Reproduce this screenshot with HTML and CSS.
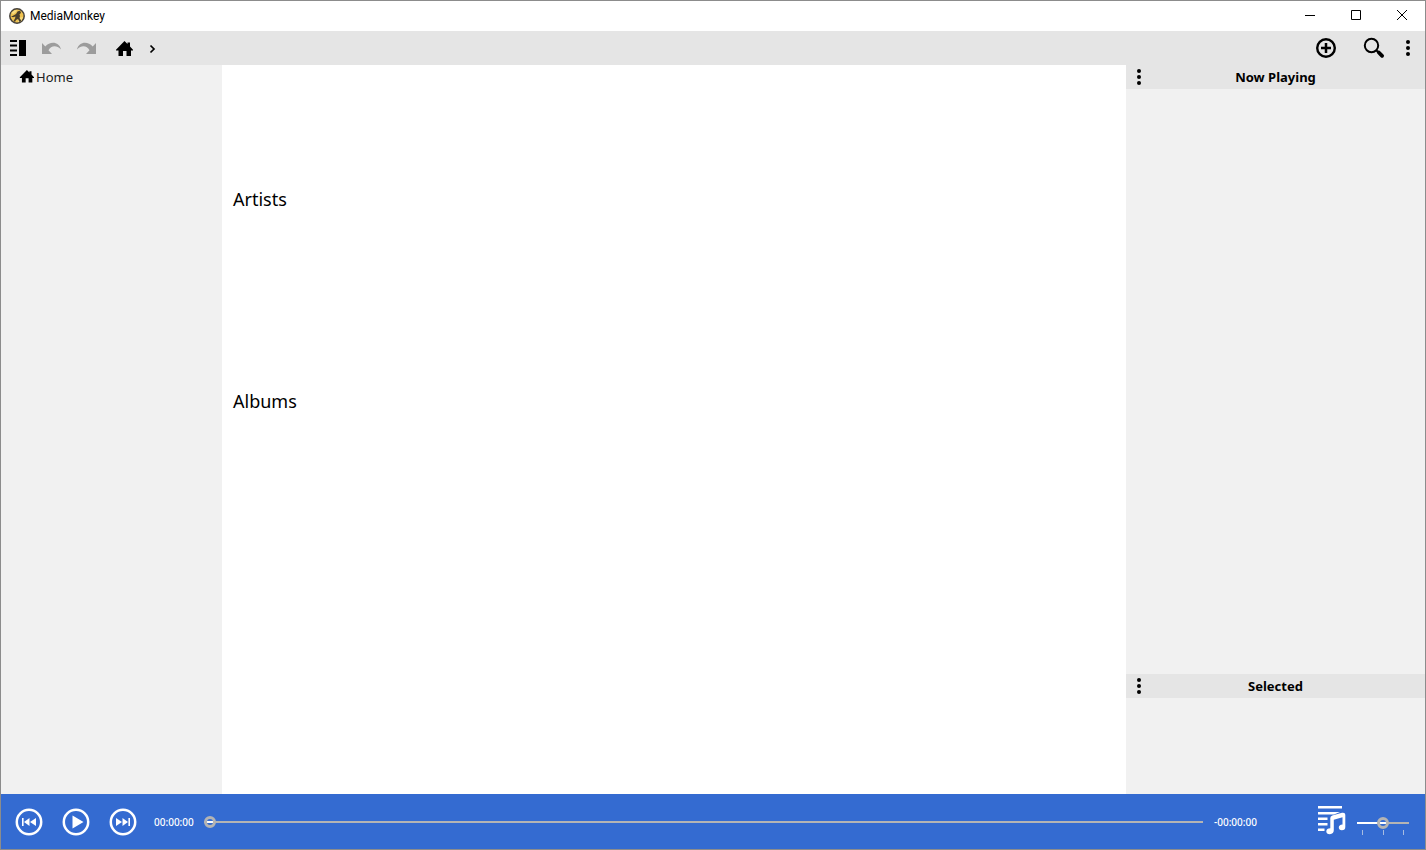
FILE: index.html
```html
<!DOCTYPE html>
<html lang="en">
<head>
<meta charset="utf-8">
<title>MediaMonkey</title>
<link rel="stylesheet" href="styles.css">
</head>
<body>
<div class="window">
  <header class="titlebar">
    <svg class="app-icon" width="16" height="16" viewBox="0 0 16 16" aria-hidden="true">
      <circle cx="8" cy="8" r="7.2" fill="#efc250" stroke="#45413c" stroke-width="1.5"/>
      <path d="M2 5 5 2.5 8 2 7 4 4.500 6zM9 10 14 9 12.500 13 9 14z" fill="#f8dc82"/>
      <path d="M8.500 3.500 10.500 2.800 12 4 11.500 5.500 10.500 6.200 11 8 10.500 10 12.500 13 10.500 14 9 11 7 12 6 14 4.500 13 6 10.500 6.500 8.500 4 9.200 2 8.500 4 7.800 7 6z" fill="#4a3f2c"/>
    </svg>
    <h1 class="app-name">MediaMonkey</h1>
    <div class="window-buttons">
      <button class="window-button" aria-label="Minimize"><svg width="12" height="12" viewBox="0 0 12 12"><path d="M1 6.500h10" stroke="#000"/></svg></button>
      <button class="window-button" aria-label="Maximize"><svg width="12" height="12" viewBox="0 0 12 12"><path d="M1.500 1.500h9v9h-9z" fill="none" stroke="#000"/></svg></button>
      <button class="window-button" aria-label="Close"><svg width="12" height="12" viewBox="0 0 12 12"><path d="m1 1 10 10M11 1 1 11" stroke="#000"/></svg></button>
    </div>
  </header>

  <div class="toolbar">
    <button class="tool" aria-label="Toggle panels"><svg width="20" height="20" viewBox="0 0 20 20"><path d="M11 2h7v16h-7zM2 2h7v2H2zM2 6.500h7v2H2zM2 11.500h7v2H2zM2 16h7v2H2z"/></svg></button>
    <button class="tool" aria-label="Back" disabled><svg width="20" height="20" viewBox="0 0 20 20"><path id="undo" d="M0 5v11h10L6.500 12.200C9 7.500 14.500 6.500 19 11.500 17.500 4 8.500 2.500 3.300 8.500z"/></svg></button>
    <button class="tool" aria-label="Forward" disabled><svg width="20" height="20" viewBox="0 0 20 20"><use href="#undo" transform="matrix(-1 0 0 1 20 0)"/></svg></button>
    <nav class="breadcrumb" aria-label="Location">
      <button class="tool" aria-label="Home"><svg width="20" height="20" viewBox="0 0 20 20"><path id="home" d="M10.500 3 13.500 6V4.500h2.500v4L19 11.800V12.500h-2v5.500h-4.500v-5H9v5H4.500v-5.500H2v-.700z"/></svg></button>
      <button class="tool" aria-label="Show children"><svg width="8" height="20" viewBox="0 0 8 20"><path d="m2.500 7.500 3.500 3.500-3.500 3.500" fill="none" stroke="#000" stroke-width="1.700"/></svg></button>
    </nav>
    <div class="toolbar-end">
      <button class="tool" aria-label="Add"><svg width="22" height="22" viewBox="0 0 22 22"><circle cx="11" cy="11" r="8.800" fill="none" stroke="#000" stroke-width="2.400"/><path d="M11 6v10M6 11h10" stroke="#000" stroke-width="2.500"/></svg></button>
      <button class="tool" aria-label="Search"><svg width="22" height="22" viewBox="0 0 22 22"><circle cx="8.500" cy="8.500" r="6.700" fill="none" stroke="#000" stroke-width="2"/><path d="m13.500 13.500 2 2" stroke="#000" stroke-width="2"/><path d="m15.800 15.500 3.300 3.300" stroke="#000" stroke-width="3.800" stroke-linecap="round"/></svg></button>
      <button class="tool" aria-label="Menu"><svg width="6" height="18" viewBox="0 0 6 18"><circle cx="3" cy="3" r="2"/><circle cx="3" cy="9" r="2"/><circle cx="3" cy="15" r="2"/></svg></button>
    </div>
  </div>

  <div class="workspace">
    <nav class="sidebar" aria-label="Library">
      <a class="tree-item" href="#home-view"><svg width="15" height="15" viewBox="1 3 18 18" aria-hidden="true"><use href="#home"/></svg>Home</a>
    </nav>
    <main class="content" id="home-view">
      <section class="shelf"><h2 class="shelf-title">Artists</h2></section>
      <section class="shelf"><h2 class="shelf-title">Albums</h2></section>
    </main>
    <aside class="panels">
      <section class="panel panel-grow">
        <header class="panel-header">
          <button class="tool" aria-label="Now Playing menu"><svg width="6" height="18" viewBox="0 0 6 18"><circle cx="3" cy="3" r="2"/><circle cx="3" cy="9" r="2"/><circle cx="3" cy="15" r="2"/></svg></button>
          <h2 class="panel-title">Now Playing</h2>
        </header>
      </section>
      <section class="panel">
        <header class="panel-header">
          <button class="tool" aria-label="Selected menu"><svg width="6" height="18" viewBox="0 0 6 18"><circle cx="3" cy="3" r="2"/><circle cx="3" cy="9" r="2"/><circle cx="3" cy="15" r="2"/></svg></button>
          <h2 class="panel-title">Selected</h2>
        </header>
      </section>
    </aside>
  </div>

  <footer class="player">
    <div class="transport">
      <button class="play-button" aria-label="Previous"><svg width="28" height="28" viewBox="0 0 28 28"><circle class="ring" cx="14" cy="14" r="12.200"/><path d="M7 10h1.600v8H7zM14.500 10v8L9 14zM21 10v8l-6-4z"/></svg></button>
      <button class="play-button" aria-label="Play"><svg width="28" height="28" viewBox="0 0 28 28"><circle class="ring" cx="14" cy="14" r="12.200"/><path d="M10.500 7.500v13l11-6.500z"/></svg></button>
      <button class="play-button" aria-label="Next"><svg width="28" height="28" viewBox="0 0 28 28"><circle class="ring" cx="14" cy="14" r="12.200"/><path d="M19.400 10H21v8h-1.600zM13.500 10v8l5.500-4zM7 10v8l6-4z"/></svg></button>
    </div>
    <span class="time">00:00:00</span>
    <input class="slider seek" type="range" min="0" max="100" value="0" aria-label="Position">
    <span class="time time-left">-00:00:00</span>
    <button class="play-button queue" aria-label="Playlist"><svg width="30" height="36" viewBox="0 0 30 36"><path d="M2 2h24v2.500H2zM2 8h22l-6 2.500H2zM2 13.500h9.500V16H2zM2 19h9.500v2.500H2zM2 24.500h6.500V27H2z"/><path d="M14.300 14q0-2 2-2.600L26 8.800q3.300-.600 3.300 2v12.200q0 3.300-3.500 3.300-3-.300-3-2.800 0-2.700 3.700-3v-7.200l-8.700 2.400v10.300q0 4-4 4.200-3.500-.200-3.500-3 .200-2.800 4-3z"/></svg></button>
    <div class="volume">
      <input class="slider level" type="range" min="0" max="100" value="50" aria-label="Volume">
      <div class="ticks" aria-hidden="true"><i class="tick"></i><i class="tick"></i><i class="tick"></i></div>
    </div>
  </footer>
</div>
</body>
</html>
```
FILE: styles.css
```css
* { box-sizing: border-box; }

body {
  margin: 0;
  font-family: "Noto Sans", sans-serif;
  font-size: 13px;
  line-height: 24px;
  color: #000;
}

h1, h2 { margin: 0; font-weight: 400; }
svg { display: block; }

button {
  display: flex;
  align-items: center;
  justify-content: center;
  padding: 0;
  border: 0;
  background: none;
}

.window {
  display: flex;
  flex-direction: column;
  min-height: 100vh;
  border: 1px solid #8c8c8c;
  background: #fff;
}

.titlebar {
  display: flex;
  align-items: center;
  height: 30px;
  padding-left: 8px;
  gap: 5px;
}
.app-name { font-family: Roboto, sans-serif; font-size: 12px; }
.window-buttons { display: flex; align-self: stretch; margin-left: auto; }
.window-button { width: 46px; padding-bottom: 2px; }

.toolbar {
  display: flex;
  align-items: center;
  gap: 14px;
  height: 34px;
  padding: 0 14px 0 7px;
  background: #e5e5e5;
}
.tool:disabled { fill: #9c9c9c; }
.breadcrumb { display: flex; gap: 14px; margin-left: 4px; }
.toolbar-end { display: flex; align-items: center; gap: 26px; margin-left: auto; }
.toolbar-end .tool + .tool + .tool { margin-left: -6px; }

.workspace { display: flex; flex: 1; }
.sidebar { width: 221px; background: #f1f1f1; }
.tree-item {
  display: flex;
  align-items: center;
  gap: 2px;
  padding-left: 18px;
  color: #202020;
  text-decoration: none;
}
.tree-item svg { fill: #000; }

.content { flex: 1; padding: 33px 11px; }
.shelf { min-height: 202px; padding-top: 89px; }
.shelf-title { font-size: 18px; }

.panels { display: flex; flex-direction: column; width: 299px; background: #f1f1f1; }
.panel { min-height: 120px; }
.panel-grow { flex: 1; }
.panel-header {
  display: grid;
  grid-template-columns: 26px 1fr 26px;
  height: 24px;
  background: #e5e5e5;
}
.panel-title { font-size: 13px; font-weight: 700; text-align: center; }

.player {
  display: flex;
  align-items: center;
  height: 55px;
  padding: 0 16px 0 14px;
  background: #346bd1;
  color: #fff;
}
.play-button { fill: #fff; }
.ring { fill: none; stroke: #fff; stroke-width: 2.5px; }
.transport { display: flex; gap: 19px; margin-right: 17px; }
.time { width: 40px; font-size: 10px; font-weight: 500; }
.time-left { width: 52px; }
.queue { margin-left: 50px; }

.slider {
  appearance: none;
  height: 14px;
  margin: 0;
  background: linear-gradient(#b4b4b4, #b4b4b4) center / 100% 2px no-repeat;
}
.slider::-webkit-slider-thumb {
  appearance: none;
  width: 12px;
  height: 12px;
  border: 3px solid #b4b4b4;
  border-radius: 50%;
  background: linear-gradient(#fff, #fff) center / 100% 2px no-repeat #346bd1;
}
.seek { flex: 1; min-width: 0; margin: 0 11px 0 10px; }
.volume { display: grid; width: 52px; margin-left: 11px; padding-top: 7px; }
.level {
  width: 100%;
  background: linear-gradient(90deg, #fff 50%, #b4b4b4 50%) center / 100% 2px no-repeat;
}
.ticks { display: flex; justify-content: space-between; padding: 0 5px; }
.tick { width: 1px; height: 5px; background: #a8bce0; }
```
